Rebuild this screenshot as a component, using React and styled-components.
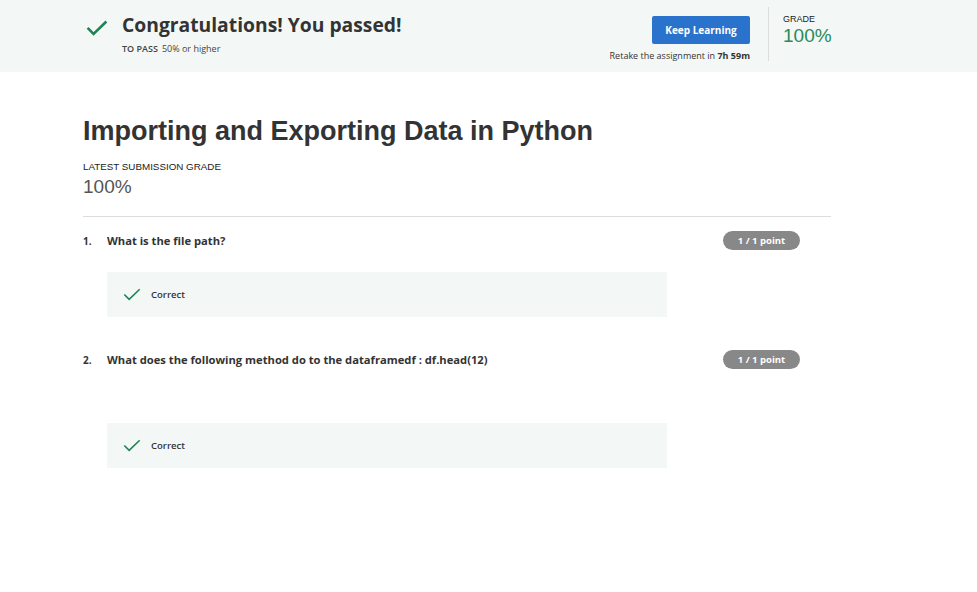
import React from "react";
import styled, { createGlobalStyle } from "styled-components";

const GlobalStyle = createGlobalStyle`
  body {
    margin: 0;
    background: #ffffff;
    font-family: "Open Sans", "Liberation Sans", sans-serif;
    color: #333;
  }
`;

const questions = [
  { id: 1, text: "What is the file path?", top: "14px", gap: "22px" },
  { id: 2, text: "What does the following method do to the dataframedf : df.head(12)", top: "33px", gap: "54px" },
];

const Check = ({ size = 22, width = 2.6 }) => (
  <svg width={size} height={size * 0.72} viewBox="0 0 22 16" fill="none">
    <path d="M1.5 8 L7.5 14 L20.5 1.5" stroke="#1f8354" strokeWidth={width} />
  </svg>
);

const Banner = styled.header`
  height: 72px;
  background: #f3f8f6;
`;

const BannerInner = styled.div`
  width: 762px;
  height: 100%;
  margin-left: 86px;
  display: flex;
  align-items: stretch;
`;

const PassBlock = styled.div`
  flex: 1;
  display: flex;
  align-items: flex-start;
  padding-top: 20px;
  gap: 14px;
`;

const PassTitle = styled.h1`
  margin: -10px 0 0 0;
  font-size: 19.3px;
  font-weight: 700;
  color: #333;
  line-height: 30px;
`;

const PassSub = styled.div`
  font-size: 9px;
  color: #444;
  margin-top: 2px;
  b {
    font-weight: 600;
    margin-right: 4px;
  }
`;

const ActionBlock = styled.div`
  display: flex;
  flex-direction: column;
  align-items: flex-end;
  padding-right: 18px;
  border-right: 1px solid #dcdcdc;
  margin: 7px 0 11px 0;
  padding-top: 9px;
`;

const KeepButton = styled.button`
  flex-shrink: 0;
  width: 98px;
  height: 28px;
  background: #2a73cc;
  color: #fff;
  border: none;
  border-radius: 2px;
  font-family: "Open Sans", sans-serif;
  font-weight: 700;
  font-size: 10px;
  padding: 0;
`;

const Retake = styled.div`
  font-size: 9px;
  line-height: 12px;
  color: #333;
  margin-top: 6px;
  white-space: nowrap;
  b {
    font-weight: 700;
  }
`;

const GradeBlock = styled.div`
  padding: 14px 0 0 14px;
  width: 65px;
`;

const Label = styled.div`
  font-family: "Liberation Sans", Arial, sans-serif;
  font-size: ${(p) => p.size || "9px"};
  color: #222;
  text-transform: uppercase;
`;

const BigGrade = styled.div`
  font-family: "Liberation Sans", Arial, sans-serif;
  font-size: ${(p) => p.size || "19px"};
  color: ${(p) => p.color || "#555"};
  line-height: 1.2;
  margin-top: ${(p) => p.top || "1px"};
`;

const Main = styled.main`
  width: 748px;
  margin-left: 83px;
  padding-top: 40px;
`;

const Title = styled.h2`
  font-family: "Liberation Sans", Arial, sans-serif;
  font-size: 27px;
  font-weight: 700;
  color: #333;
  margin: 0 0 11px 0;
  line-height: 38px;
`;

const Divider = styled.hr`
  border: none;
  border-top: 1px solid #dddddd;
  margin: 17px 0 0 0;
`;

const QuestionRow = styled.div`
  display: flex;
  align-items: flex-start;
  padding-right: 31px;
  margin-top: ${(p) => p.top};
  font-size: 11.2px;
  font-weight: 700;
  color: #333;
`;

const QNum = styled.div`
  width: 24px;
  font-size: 10px;
  padding-top: 3px;
`;

const QText = styled.div`
  flex: 1;
  padding-top: 2px;
`;

const PointBadge = styled.div`
  width: 77px;
  height: 19px;
  border-radius: 9.5px;
  background: #888888;
  color: #fff;
  font-size: 9.5px;
  font-weight: 700;
  display: flex;
  align-items: center;
  justify-content: center;
`;

const CorrectBox = styled.div`
  width: 560px;
  height: 45px;
  margin-left: 24px;
  margin-top: ${(p) => p.gap};
  background: #f3f8f6;
  display: flex;
  align-items: center;
  padding-left: 16px;
  box-sizing: border-box;
  gap: 10px;
  font-size: 9.5px;
  font-weight: 600;
  color: #333;
`;

export default function App() {
  return (
    <>
      <GlobalStyle />
      <Banner>
        <BannerInner>
          <PassBlock>
            <Check size={22} width={2.6} />
            <div>
              <PassTitle>Congratulations! You passed!</PassTitle>
              <PassSub>
                <b>TO PASS</b>50% or higher
              </PassSub>
            </div>
          </PassBlock>
          <ActionBlock>
            <KeepButton>Keep Learning</KeepButton>
            <Retake>
              Retake the assignment in <b>7h 59m</b>
            </Retake>
          </ActionBlock>
          <GradeBlock>
            <Label>Grade</Label>
            <BigGrade color="#2a8a5a" size="19px">100%</BigGrade>
          </GradeBlock>
        </BannerInner>
      </Banner>
      <Main>
        <Title>Importing and Exporting Data in Python</Title>
        <Label size="9.8px">Latest Submission Grade</Label>
        <BigGrade top="4px">100%</BigGrade>
        <Divider />
        {questions.map((q) => (
          <div key={q.id}>
            <QuestionRow top={q.top}>
              <QNum>{q.id}.</QNum>
              <QText>{q.text}</QText>
              <PointBadge>1 / 1 point</PointBadge>
            </QuestionRow>
            <CorrectBox gap={q.gap}>
              <Check size={18} width={2} />
              Correct
            </CorrectBox>
          </div>
        ))}
      </Main>
    </>
  );
}
